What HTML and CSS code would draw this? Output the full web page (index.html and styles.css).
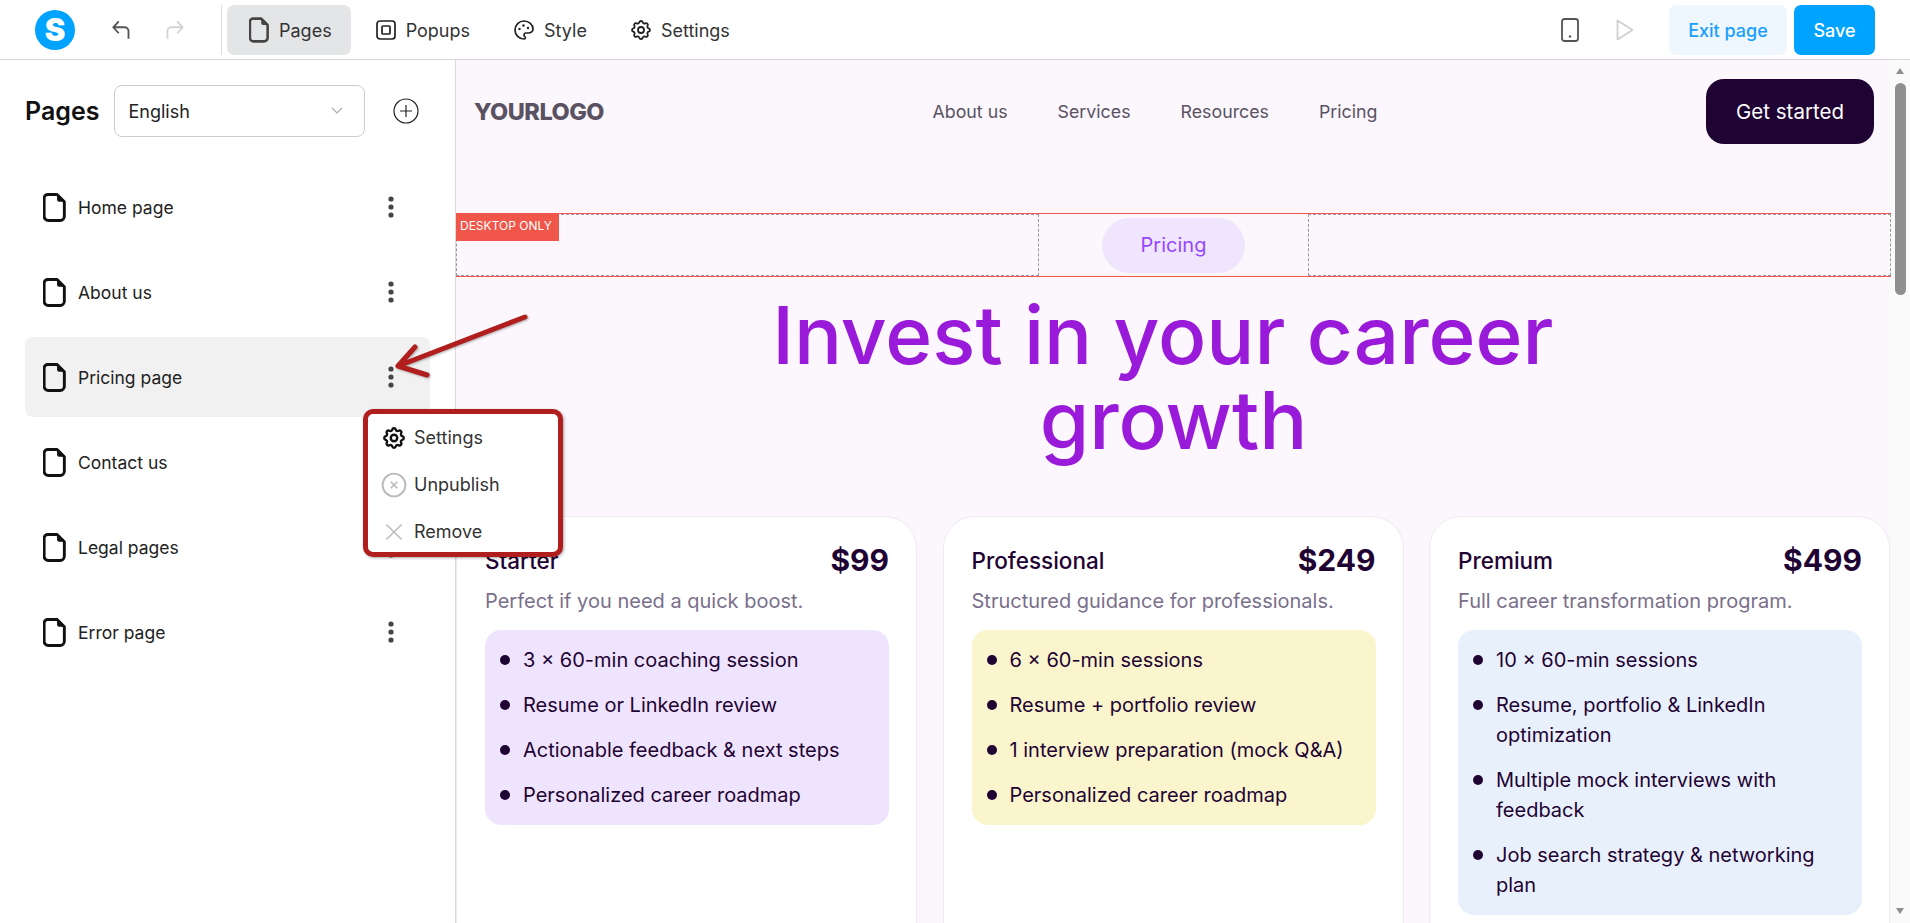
FILE: index.html
```html
<!DOCTYPE html>
<html lang="en">
<head>
  <meta charset="UTF-8">
  <meta name="viewport" content="width=device-width, initial-scale=1.0">
  <title>Pages</title>
  <link rel="stylesheet" href="styles.css">
</head>
<body>
  <svg class="defs" width="0" height="0">
    <symbol id="file" viewBox="0 0 22 28">
      <path d="M5 1.500h8.500l7 7v14a4 4 0 0 1 -4 4h-11.500a4 4 0 0 1 -4 -4v-17.500a3.500 3.500 0 0 1 4 -3.500z" fill="none" stroke="currentColor" stroke-width="2.800" stroke-linejoin="round"/>
      <path d="M13.500 1.500v5a2 2 0 0 0 2 2h5z" fill="currentColor"/>
    </symbol>
    <symbol id="gear" viewBox="0 0 24 24">
      <path d="M10.325 4.317c.426 -1.756 2.924 -1.756 3.35 0a1.724 1.724 0 0 0 2.573 1.066c1.543 -.94 3.31 .826 2.37 2.37a1.724 1.724 0 0 0 1.065 2.572c1.756 .426 1.756 2.924 0 3.35a1.724 1.724 0 0 0 -1.066 2.573c.94 1.543 -.826 3.31 -2.37 2.37a1.724 1.724 0 0 0 -2.572 1.065c-.426 1.756 -2.924 1.756 -3.35 0a1.724 1.724 0 0 0 -2.573 -1.066c-1.543 .94 -3.31 -.826 -2.37 -2.37a1.724 1.724 0 0 0 -1.065 -2.572c-1.756 -.426 -1.756 -2.924 0 -3.35a1.724 1.724 0 0 0 1.066 -2.573c-.94 -1.543 .826 -3.31 2.37 -2.37c1 .608 2.296 .07 2.572 -1.065z" fill="none" stroke="currentColor"/>
      <circle cx="12" cy="12" r="3" fill="none" stroke="currentColor"/>
    </symbol>
    <symbol id="dots" viewBox="0 0 6 22">
      <circle cx="3" cy="3" r="2.600" fill="currentColor"/>
      <circle cx="3" cy="11" r="2.600" fill="currentColor"/>
      <circle cx="3" cy="19" r="2.600" fill="currentColor"/>
    </symbol>
  </svg>

  <header class="topbar">
    <div class="logo">S</div>
    <svg class="hist" viewBox="0 0 24 24"><path d="M18 20v-7a3.500 3.500 0 0 0 -3.500 -3.500h-10.500m5 -5.500l-5 5.500l5 5.500" fill="none" stroke="#555" stroke-width="1.700"/></svg>
    <svg class="hist hist-off" viewBox="0 0 24 24"><path d="M6 20v-7a3.500 3.500 0 0 1 3.500 -3.500h10.500m-5 -5.500l5 5.500l-5 5.500" fill="none" stroke="#d4d4d4" stroke-width="1.700"/></svg>
    <div class="divider"></div>
    <nav class="tabs">
      <a class="tab tab-active"><svg class="tab-icon tab-file"><use href="#file"/></svg>Pages</a>
      <a class="tab"><svg class="tab-icon" viewBox="0 0 24 24"><rect x="3" y="3" width="18" height="18" rx="3" fill="none" stroke="currentColor" stroke-width="1.700"/><rect x="8" y="8" width="8" height="8" rx="1" fill="none" stroke="currentColor" stroke-width="1.700"/></svg>Popups</a>
      <a class="tab"><svg class="tab-icon" viewBox="0 0 24 24"><path d="M12 21a9 9 0 0 1 0 -18c4.970 0 9 3.582 9 8c0 1.060 -.474 2.078 -1.318 2.828c-.844 .75 -1.989 1.172 -3.182 1.172h-2.500a2 2 0 0 0 -1 3.750a1.300 1.300 0 0 1 -1 2.250" fill="none" stroke="currentColor" stroke-width="1.700"/><circle cx="7.500" cy="11" r="1.200" fill="currentColor"/><circle cx="11.500" cy="7.500" r="1.200" fill="currentColor"/><circle cx="16" cy="10" r="1.200" fill="currentColor"/></svg>Style</a>
      <a class="tab"><svg class="tab-icon"><use href="#gear"/></svg>Settings</a>
    </nav>
    <div class="top-right">
      <svg class="device" viewBox="0 0 18 24"><rect x="1" y="1" width="16" height="22" rx="2.500" fill="none" stroke="#555" stroke-width="1.800"/><circle cx="9" cy="18.500" r="1.200" fill="#555"/></svg>
      <svg class="play" viewBox="0 0 18 22"><path d="M1.500 1.500l15 9.500l-15 9.500z" fill="none" stroke="#d0d0d0" stroke-width="1.800" stroke-linejoin="round"/></svg>
      <button class="btn btn-exit">Exit page</button>
      <button class="btn btn-save">Save</button>
    </div>
  </header>

  <div class="main">
    <aside class="sidebar">
      <div class="side-head">
        <h2 class="side-title">Pages</h2>
        <div class="lang">English
          <svg class="chev" viewBox="0 0 12 8"><path d="M1 1l5 5l5 -5" fill="none" stroke="#aaa" stroke-width="1.200"/></svg>
        </div>
        <svg class="add" viewBox="0 0 26 26"><circle cx="13" cy="13" r="12" fill="none" stroke="#222" stroke-width="1.200"/><path d="M13 7v12M7 13h12" stroke="#222" stroke-width="1.200"/></svg>
      </div>
      <ul class="page-list">
        <li class="page-row"><svg class="page-icon"><use href="#file"/></svg>Home page<svg class="more"><use href="#dots"/></svg></li>
        <li class="page-row"><svg class="page-icon"><use href="#file"/></svg>About us<svg class="more"><use href="#dots"/></svg></li>
        <li class="page-row page-row-active"><svg class="page-icon"><use href="#file"/></svg>Pricing page<svg class="more"><use href="#dots"/></svg></li>
        <li class="page-row"><svg class="page-icon"><use href="#file"/></svg>Contact us<svg class="more"><use href="#dots"/></svg></li>
        <li class="page-row"><svg class="page-icon"><use href="#file"/></svg>Legal pages<svg class="more"><use href="#dots"/></svg></li>
        <li class="page-row"><svg class="page-icon"><use href="#file"/></svg>Error page<svg class="more"><use href="#dots"/></svg></li>
      </ul>
    </aside>

    <section class="preview">
      <div class="site-nav">
        <div class="site-logo">YOURLOGO</div>
        <div class="site-links">
          <a>About us</a>
          <a>Services</a>
          <a>Resources</a>
          <a>Pricing</a>
        </div>
        <button class="get-started">Get started</button>
      </div>

      <div class="desktop-only">
        <span class="desktop-badge">DESKTOP ONLY</span>
        <div class="col col-side"></div>
        <div class="col col-mid"><span class="pill">Pricing</span></div>
        <div class="col col-side"></div>
      </div>

      <h1 class="headline">Invest in your career&nbsp;<br>growth</h1>

      <div class="plans">
        <article class="plan">
          <div class="plan-top"><span class="plan-name">Starter</span><span class="plan-price">$99</span></div>
          <p class="plan-desc">Perfect if you need a quick boost.</p>
          <ul class="plan-list list-purple">
            <li>3 × 60-min coaching session</li>
            <li>Resume or LinkedIn review</li>
            <li>Actionable feedback &amp; next steps</li>
            <li>Personalized career roadmap</li>
          </ul>
        </article>
        <article class="plan">
          <div class="plan-top"><span class="plan-name">Professional</span><span class="plan-price">$249</span></div>
          <p class="plan-desc">Structured guidance for professionals.</p>
          <ul class="plan-list list-yellow">
            <li>6 × 60-min sessions</li>
            <li>Resume + portfolio review</li>
            <li>1 interview preparation (mock Q&amp;A)</li>
            <li>Personalized career roadmap</li>
          </ul>
        </article>
        <article class="plan">
          <div class="plan-top"><span class="plan-name">Premium</span><span class="plan-price">$499</span></div>
          <p class="plan-desc">Full career transformation program.</p>
          <ul class="plan-list list-blue">
            <li>10 × 60-min sessions</li>
            <li>Resume, portfolio &amp; LinkedIn optimization</li>
            <li>Multiple mock interviews with feedback</li>
            <li>Job search strategy &amp; networking plan</li>
          </ul>
        </article>
      </div>
    </section>

    <div class="scrollbar">
      <span class="arrow-up"></span>
      <span class="thumb"></span>
      <span class="arrow-down"></span>
    </div>
  </div>

  <!-- dropdown and the annotation drawn over the screenshot -->
  <div class="row-menu">
    <div class="menu-item"><svg class="menu-icon menu-gear"><use href="#gear"/></svg>Settings</div>
    <div class="menu-item"><svg class="menu-icon" viewBox="0 0 24 24"><circle cx="12" cy="12" r="10.500" fill="none" stroke="#bbb" stroke-width="1.800"/><path d="M9 9l6 6M15 9l-6 6" stroke="#bbb" stroke-width="1.600"/></svg>Unpublish</div>
    <div class="menu-item"><svg class="menu-icon" viewBox="0 0 24 24"><path d="M5 5l14 14M19 5l-14 14" stroke="#bbb" stroke-width="1.400"/></svg>Remove</div>
  </div>
  <svg class="callout" viewBox="0 0 140 70"><path d="M130 4L3 53M20 34L3 53L32 62" fill="none" stroke="#b01e1e" stroke-width="5" stroke-linecap="round" stroke-linejoin="round"/></svg>
</body>
</html>
```

FILE: styles.css
```css
* {
  box-sizing: border-box;
}

html, body {
  height: 100%;
}

body {
  margin: 0;
  overflow: hidden;
  background-color: #fff;
  color: #222;
  font-family: 'Inter', 'Liberation Sans', sans-serif;
  display: flex;
  flex-direction: column;
}

.defs {
  position: absolute;
}

/* Top bar */
.topbar {
  flex: 0 0 60px;
  display: flex;
  align-items: center;
  padding: 1px 35px 0;
  border-bottom: 1px solid #d9d9d9;
}

.logo {
  width: 40px;
  height: 40px;
  border-radius: 50%;
  background-color: #00a3ff;
  color: #fff;
  font-size: 31px;
  font-weight: 900;
  line-height: 40px;
  text-align: center;
}

.hist {
  width: 26px;
  height: 26px;
  margin-left: 34px;
}

.hist-off {
  margin-left: 26px;
}

.divider {
  width: 1px;
  height: 50px;
  margin: 0 5px 0 34px;
  background-color: #ddd;
}

.tabs {
  display: flex;
  gap: 4px;
}

.tab {
  height: 50px;
  display: flex;
  align-items: center;
  gap: 8px;
  padding: 0 19px;
  border-radius: 7px;
  font-size: 18px;
  color: #333;
}

.tab-active {
  gap: 10px;
  padding-left: 22px;
  background-color: #e4e5e7;
}

.tab-icon {
  width: 24px;
  height: 24px;
  color: #222;
  stroke-width: 1.800;
}

.tab-file {
  width: 20px;
  height: 26px;
  color: #444;
}

.top-right {
  margin-left: auto;
  display: flex;
  align-items: center;
}

.device {
  width: 18px;
  height: 24px;
}

.play {
  width: 18px;
  height: 22px;
  margin: 0 35px 0 37px;
}

.btn {
  height: 50px;
  border: none;
  border-radius: 7px;
  font-family: inherit;
  font-size: 18px;
  font-weight: 500;
}

.btn-exit {
  width: 118px;
  background-color: #eef6fe;
  color: #1a9fff;
}

.btn-save {
  width: 81px;
  margin-left: 7px;
  background-color: #00a3ff;
  color: #fff;
}

/* Main area */
.main {
  flex: 1;
  min-height: 0;
  display: flex;
}

.sidebar {
  flex: 0 0 456px;
  border-right: 1px solid #d9d9d9;
  padding: 25px 25px 0;
}

.side-head {
  display: flex;
  align-items: center;
}

.side-title {
  margin: 0 15px 0 0;
  font-size: 25px;
  font-weight: 600;
  color: #111;
}

.lang {
  width: 251px;
  height: 52px;
  display: flex;
  align-items: center;
  justify-content: space-between;
  padding: 0 21px 0 13px;
  border: 1px solid #ccc;
  border-radius: 8px;
  font-size: 18px;
}

.chev {
  width: 12px;
  height: 8px;
}

.add {
  width: 26px;
  height: 26px;
  margin-left: 28px;
}

.page-list {
  list-style: none;
  margin: 30px 0 0;
  padding: 0;
  width: 405px;
  display: flex;
  flex-direction: column;
  gap: 5px;
}

.page-row {
  height: 80px;
  display: flex;
  align-items: center;
  padding: 0 36px 0 18px;
  border-radius: 8px;
  font-size: 17.500px;
  color: #222;
}

.page-row-active {
  background-color: #f1f1f1;
}

.page-icon {
  width: 23px;
  height: 29px;
  margin-right: 12px;
  color: #111;
}

.more {
  width: 6px;
  height: 22px;
  margin-left: auto;
  color: #444;
}

/* Page preview */
.preview {
  flex: 1;
  min-width: 0;
  overflow: hidden;
  background-color: #fbf7fd;
}

.site-nav {
  display: flex;
  align-items: center;
  justify-content: space-between;
  padding: 19px 17px 0 18px;
}

.site-logo {
  font-size: 23.500px;
  font-weight: 800;
  letter-spacing: -0.5px;
  color: #5a5262;
}

.site-links {
  display: flex;
  gap: 50px;
  font-size: 17.800px;
  color: #5a5262;
}

.get-started {
  width: 168px;
  height: 65px;
  border: none;
  border-radius: 18px;
  background-color: #1f0333;
  color: #fff;
  font-family: inherit;
  font-size: 20.500px;
}

.desktop-only {
  position: relative;
  height: 64px;
  margin-top: 69px;
  display: grid;
  grid-template-columns: 583px 269px 1fr;
  border-top: 1px solid #f0564a;
  border-bottom: 1px solid #f0564a;
}

.col-side {
  border: 1px dashed #999;
}

.col-mid {
  display: flex;
  align-items: center;
  justify-content: center;
}

.pill {
  width: 143px;
  height: 55px;
  display: flex;
  align-items: center;
  justify-content: center;
  border-radius: 28px;
  background-color: #efe6fd;
  color: #9747ff;
  font-size: 20px;
}

.desktop-badge {
  position: absolute;
  top: 0;
  left: 0;
  width: 103px;
  height: 27px;
  padding: 4px 0 0 4px;
  background-color: #f0564a;
  color: #fff;
  font-size: 12px;
  white-space: nowrap;
}

.headline {
  margin: 15px 0 54px;
  text-align: center;
  font-size: 80px;
  font-weight: 500;
  line-height: 85px;
  color: #991bd9;
}

.plans {
  display: grid;
  grid-template-columns: repeat(3, 461px);
  gap: 25.500px;
}

.plan {
  height: 520px;
  padding: 26px 27px 0 28px;
  border: 1px solid #efe9f3;
  border-radius: 32px;
  background-color: #fff;
}

.plan-top {
  display: flex;
  align-items: center;
  justify-content: space-between;
  height: 34px;
}

.plan-name {
  font-size: 22.500px;
  font-weight: 500;
  color: #1f0333;
}

.plan-price {
  font-size: 30px;
  font-weight: 700;
  color: #1f0333;
}

.plan-desc {
  margin: 9px 0 14px;
  font-size: 20px;
  line-height: 30px;
  color: #7a6f8a;
}

.plan-list {
  list-style: none;
  margin: 0;
  padding: 15px 20px 15px 38px;
  display: flex;
  flex-direction: column;
  gap: 15px;
  border-radius: 16px;
  font-size: 20px;
  line-height: 30px;
  color: #1f0333;
}

.plan-list li {
  position: relative;
}

.plan-list li::before {
  content: "";
  position: absolute;
  left: -23px;
  top: 10px;
  width: 10px;
  height: 10px;
  border-radius: 50%;
  background-color: #1f0333;
}

.list-purple {
  background-color: #efe4fd;
}

.list-yellow {
  background-color: #fbf5cd;
}

.list-blue {
  background-color: #e8f0fb;
}

.scrollbar {
  flex: 0 0 19px;
  position: relative;
  background-color: #fafafa;
}

.thumb {
  position: absolute;
  top: 23px;
  left: 4px;
  width: 11px;
  height: 212px;
  border-radius: 6px;
  background-color: #8f8f8f;
}

.arrow-up, .arrow-down {
  position: absolute;
  left: 5px;
  width: 0;
  height: 0;
  border-left: 4.500px solid transparent;
  border-right: 4.500px solid transparent;
}

.arrow-up {
  top: 8px;
  border-bottom: 6px solid #8f8f8f;
}

.arrow-down {
  bottom: 9px;
  border-top: 6px solid #8f8f8f;
}

/* Overlays */
.row-menu {
  position: absolute;
  left: 363px;
  top: 409px;
  width: 200px;
  height: 148px;
  border: 5px solid #b01e1e;
  border-radius: 10px;
  background-color: #fff;
  box-shadow: 1px 1px 3px rgba(0, 0, 0, 0.35);
}

.menu-item {
  height: 47px;
  display: flex;
  align-items: center;
  gap: 7px;
  padding-left: 13px;
  font-size: 18px;
  color: #333;
}

.menu-icon {
  width: 26px;
  height: 26px;
  color: #111;
}

.menu-gear {
  stroke-width: 2.200;
}

.callout {
  position: absolute;
  left: 395px;
  top: 313px;
  width: 140px;
  height: 70px;
  filter: drop-shadow(1px 1px 1px rgba(0, 0, 0, 0.3));
}
```
